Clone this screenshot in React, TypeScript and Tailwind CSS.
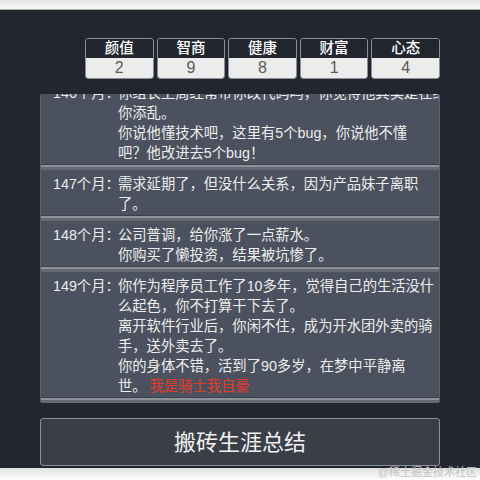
import React from "react";

type Entry = {
  month: number;
  lines: React.ReactNode[];
};

const stats = [
  { name: "颜值", value: 2 },
  { name: "智商", value: 9 },
  { name: "健康", value: 8 },
  { name: "财富", value: 1 },
  { name: "心态", value: 4 },
];

const entries: Entry[] = [
  {
    month: 145,
    lines: ["这个月风平浪静，你照常上班、下班。"],
  },
  {
    month: 146,
    lines: [
      "你组长上周经常带你改代码吗，你觉得他其实是在给",
      "你添乱。",
      "你说他懂技术吧，这里有5个bug，你说他不懂",
      "吧？他改进去5个bug！",
    ],
  },
  {
    month: 147,
    lines: ["需求延期了，但没什么关系，因为产品妹子离职", "了。"],
  },
  {
    month: 148,
    lines: ["公司普调，给你涨了一点薪水。", "你购买了懒投资，结果被坑惨了。"],
  },
  {
    month: 149,
    lines: [
      "你作为程序员工作了10多年，觉得自己的生活没什",
      "么起色，你不打算干下去了。",
      "离开软件行业后，你闲不住，成为开水团外卖的骑",
      "手，送外卖去了。",
      "你的身体不错，活到了90多岁，在梦中平静离",
      <>
        世。<span className="ml-[3px] text-[#e43b27]">我是骑士我自豪</span>
      </>,
    ],
  },
];

function StatBox({ name, value }: { name: string; value: number }) {
  return (
    <div className="flex-1 flex flex-col overflow-hidden rounded-[3px] border border-[#8b8e95]">
      <div className="h-[19px] text-center bg-[#22262e] text-[14.5px] font-medium text-white leading-[19px]">
        {name}
      </div>
      <div className="h-[20px] text-center bg-[#ececec] text-[16px] text-[#5a5a5a] leading-[20px]">
        {value}
      </div>
    </div>
  );
}

function Separator() {
  return (
    <div className="h-[6px] flex flex-col">
      <div className="h-[1px] bg-[#3c414b]" />
      <div className="h-[2px] bg-[#8d9199]" />
      <div className="h-[3px] bg-[#646974]" />
    </div>
  );
}

function LogEntry({ entry }: { entry: Entry }) {
  return (
    <div className="flex flex-col">
      <div className="flex pl-[12px] pt-[4px] pb-[1px] text-[14.3px] leading-[20px] text-[#ededed]">
        <div className="w-[65px] shrink-0 whitespace-nowrap">{entry.month}个月：</div>
        <div className="flex flex-col">
          {entry.lines.map((line, i) => (
            <div key={i} className="whitespace-nowrap">
              {line}
            </div>
          ))}
        </div>
      </div>
      <Separator />
    </div>
  );
}

export default function App() {
  return (
    <div
      className="relative w-[480px] h-[480px] overflow-hidden bg-white flex flex-col"
      style={{ fontFamily: '"Liberation Sans", "Noto Sans CJK SC", sans-serif' }}
    >
      <div className="h-[10px] shrink-0 bg-gradient-to-b from-[#e4e4e4] to-[#f9f9f9] border-b border-[#a9a9a9]" />

      <div className="h-[458px] shrink-0 bg-[#22262e] flex flex-col items-center pt-[28px]">
        <div className="w-[400px] flex justify-end">
          <div className="w-[355px] flex gap-[3px]">
            {stats.map((s) => (
              <StatBox key={s.name} name={s.name} value={s.value} />
            ))}
          </div>
        </div>

        <div className="mt-[15px] w-[400px] h-[309px] overflow-hidden flex flex-col justify-end rounded-[2px] bg-[#4b515e] border-x border-[#5c616c]">
          {entries.map((e) => (
            <LogEntry key={e.month} entry={e} />
          ))}
        </div>

        <button className="mt-[15px] w-[400px] h-[48px] flex items-center justify-center rounded-[3px] border border-[#8b8f98] bg-[#3a3e47] text-[22px] text-[#f2f2f2]">
          搬砖生涯总结
        </button>
      </div>

      <div className="flex-1 bg-gradient-to-b from-[#e0e0e0] to-white" />

      <div className="absolute right-[3px] bottom-[1px] text-[11px] leading-[13px] text-[#c4c4c4]">
        @稀土掘金技术社区
      </div>
    </div>
  );
}
